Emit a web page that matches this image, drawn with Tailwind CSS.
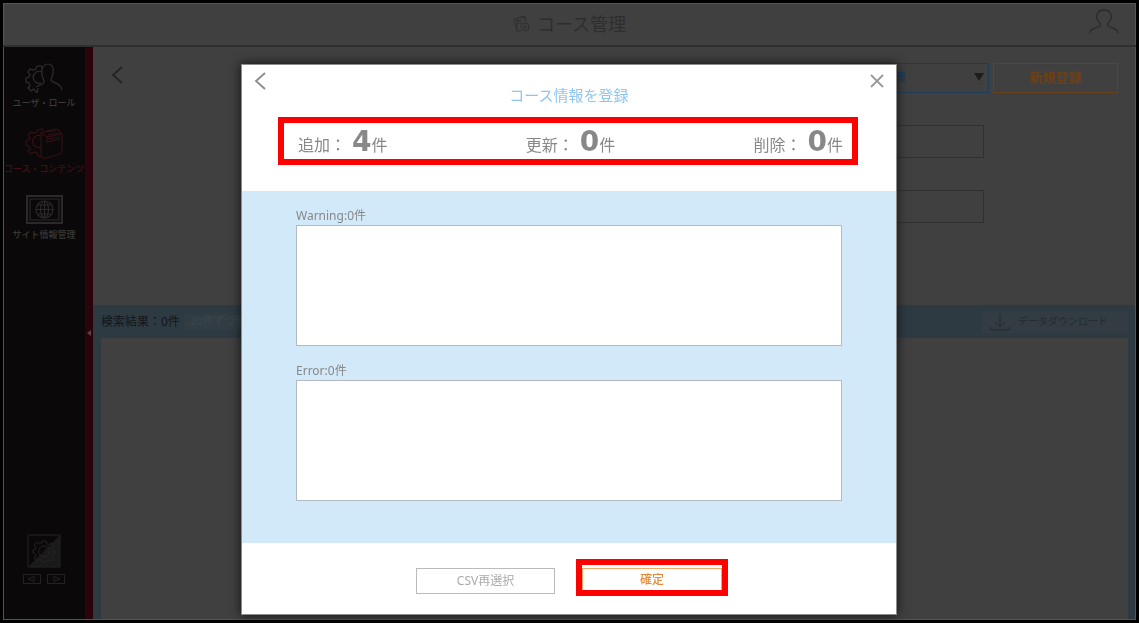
<!DOCTYPE html>
<html lang="ja">
<head>
  <meta charset="utf-8"/>
  <title>コース管理</title>
  <script src="https://cdn.jsdelivr.net/npm/@tailwindcss/browser@4"></script>
</head>
<body class="bg-[#404040] font-['Noto_Sans','Noto_Sans_CJK_JP',sans-serif]">
  <!-- icons used more than once -->
  <svg class="hidden">
    <symbol id="gear" viewBox="0 0 24 24" fill="none" stroke="currentColor">
      <path d="M10 2h4l.6 2.8 2.1.9 2.4-1.6 2.8 2.8-1.6 2.4.9 2.1L23 12v3l-2.2.6-.9 2.1 1.6 2.4-2.6 2.2-2.2-1.5-2.1.9L14 23h-4l-.6-2.3-2.1-.9-2.4 1.5-2.6-2.2 1.5-2.4-.9-2.1L1 14v-3l2-.6.8-2.1-1.5-2.4 2.8-2.8 2.4 1.6 1.9-.9z"/>
      <circle cx="12" cy="12.5" r="5.5"/>
    </symbol>
    <symbol id="back" viewBox="0 0 12 18" fill="none" stroke="currentColor" stroke-width="1.8">
      <path d="M11 1L2 9l9 8"/>
    </symbol>
  </svg>

  <div class="flex flex-col min-h-screen border-[3px] border-black outline-1 -outline-offset-4 outline-[#555]">
    <header class="relative flex h-11 shrink-0 items-center justify-center border-b-2 border-[#2f2f2f] text-[#2e2e2f]">
      <h1 class="flex items-center gap-1.5 text-lg">
        <svg class="size-[18px]" viewBox="0 0 18 18" fill="none" stroke="currentColor">
          <path d="M8 16H4L1 5l3-2v11M4 3l7-1 2 5M4 6l5-1M5 8h4M7 2l5-1 1 3"/>
          <circle cx="12" cy="12" r="4"/>
          <circle cx="12" cy="12" r="1.5"/>
        </svg>
        コース管理
      </h1>
      <button class="absolute right-4 top-1" aria-label="アカウント">
        <svg class="h-8 w-8" viewBox="0 0 32 32" fill="none" stroke="#2a2a2a" stroke-width="1.3">
          <path d="M2 26c0-4 3-4 8-6 3-1 3-3 1-5-2-2-3-4-2-7 1-4 4-5 7-5s6 1 7 5c1 3 0 5-2 7-2 2-2 4 1 5 5 2 7 2 8 6"/>
        </svg>
      </button>
    </header>

    <div class="flex flex-1">
      <nav class="flex w-[90px] shrink-0 flex-col justify-between border-r-8 border-[#2b040b] bg-[#0a0808] pt-3.5 pb-9 text-[9px] font-medium leading-4 text-[#3b3939]">
        <div class="flex flex-col">
          <a href="#" class="flex h-[66px] flex-col items-center gap-0.5 whitespace-nowrap">
            <svg class="h-8 w-10 shrink-0 text-[#302e2e]" viewBox="0 0 40 32" fill="none" stroke="currentColor" stroke-width="1.2">
              <path d="M18 7l-1-2h-4l-1 3-3 1-3-1-2 3 2 3-1 2-3 1v4l3 1 1 3-2 2 3 3 3-2 3 4 1-5M17 22a6 6 0 1 1 1-11"/>
              <path d="M12 26c6-3 8-3 8-6 0-2-2-3-2-6-1-8 2-11 6-11s6 3 5 9c0 4-2 5-2 7 0 3 10 2 11 10"/>
            </svg>
            <span>ユーザ・ロール</span>
          </a>
          <a href="#" class="flex h-[66px] flex-col items-center gap-0.5 whitespace-nowrap text-[#451015]">
            <svg class="h-8 w-10 shrink-0 text-[#351014]" viewBox="0 0 40 32" fill="none" stroke="currentColor" stroke-width="1.2">
              <path d="M19 4l-1-2-4 1-1 2-3 1-3-1-3 3 2 3-1 2-3 1v4l3 1 1 3-2 2 3 3 3-2 3 1 1 3 3 1M17 20a6 6 0 1 1 0-11"/>
              <path d="M17 7q0-2 3-2l11-3c3 0 4 1 5 3l2 2v18q0 1-2 2l-13 4c-3 1-6 0-6-3zM18 7q3 2 6 3l13-3M23 10v5l13-3M20 5q8-1 12-1M24 8l11-2M24 12l12-2"/>
            </svg>
            <span>コース・コンテンツ</span>
          </a>
          <a href="#" class="flex h-[66px] flex-col items-center gap-0.5 whitespace-nowrap">
            <svg class="h-8 w-10 shrink-0 text-[#2b2929]" viewBox="0 0 40 32" fill="none" stroke="currentColor" stroke-width="1.2">
              <path d="M3 3h35v27H3z" stroke-width="2"/>
              <path d="M6 6h29v21H6z"/>
              <circle cx="20.500" cy="16.500" r="8.500"/>
              <ellipse cx="20.500" cy="16.500" rx="4" ry="8.500"/>
              <path d="M20.500 8v17M12 16.500h17M14 12h13M14 21h13"/>
            </svg>
            <span>サイト情報管理</span>
          </a>
        </div>

        <div class="flex flex-col items-center gap-1.5">
          <div class="text-[#252520]">
            <svg class="size-[34px]" viewBox="0 0 34 34">
              <path d="M33 1v32H1z" fill="#1b1a1a"/>
              <path d="M1 1h32v32H1z" fill="none" stroke="#242222"/>
              <use href="#gear" x="5" y="5" width="24" height="24"/>
            </svg>
          </div>
          <div class="flex gap-1.5 text-[#242222]">
            <button aria-label="前へ"><svg class="h-2.5 w-[18px]" viewBox="0 0 18 10" fill="none" stroke="currentColor"><path d="M.5.5h17v9H.5zM11 2.500v5L5 5z"/></svg></button>
            <button aria-label="次へ"><svg class="h-2.5 w-[18px]" viewBox="0 0 18 10" fill="none" stroke="currentColor"><path d="M.5.5h17v9H.5zM7 2.500v5L13 5z"/></svg></button>
          </div>
        </div>

        <!-- sidebar handle -->
        <button class="absolute left-[86px] top-[329px]" aria-label="メニューを閉じる">
          <svg class="h-2 w-1.5" viewBox="0 0 6 8"><path d="M5 1v6L1 4z" fill="#5c4145"/></svg>
        </button>
      </nav>

      <main class="flex flex-1 flex-col">
        <section class="flex h-[258px] flex-col pt-4 pr-[18px]">
          <div class="flex items-start justify-between">
            <button class="ml-[18px] mt-[3px] text-[#242424]" aria-label="戻る">
              <svg class="h-[18px] w-3"><use href="#back"/></svg>
            </button>
            <div class="flex gap-1">
              <div class="relative">
                <select aria-label="管理対象" class="h-[30px] w-[148px] appearance-none border border-[#1c3c5c] pl-1 text-xs font-bold text-[#1c3c5c]">
                  <option>コース管理</option>
                </select>
                <svg class="pointer-events-none absolute right-1 top-2.5 h-2 w-3" viewBox="0 0 12 8"><path d="M1 0h10L6 8z" fill="#1c1c1c"/></svg>
              </div>
              <button class="h-[30px] w-[125px] border border-[#6b411a] text-[13px] font-bold text-[#6b411a]">新規登録</button>
            </div>
          </div>
          <div class="mt-8 mr-[134px] flex flex-col items-end gap-8">
            <input type="text" aria-label="コース名" class="h-[33px] w-[600px] border border-[#303030]"/>
            <input type="text" aria-label="コースID" class="h-[33px] w-[600px] border border-[#303030]"/>
          </div>
        </section>

        <section class="flex flex-1 flex-col bg-[#2e3a42] px-2">
          <div class="flex h-[33px] items-center justify-between text-[#121618]">
            <div class="flex items-center gap-1 text-xs">
              <p>検索結果：0件</p>
              <select aria-label="表示件数" class="h-4 appearance-none bg-[#313c43] px-1.5 text-[11px] text-[#3b474e]">
                <option>20件ずつ表示</option>
              </select>
            </div>
            <button class="flex h-[22px] w-[146px] items-center gap-2 bg-[#333c42] pl-2 text-[10px] text-[#232b30]">
              <svg class="h-[18px] w-5" viewBox="0 0 20 18" fill="none" stroke="currentColor"><path d="M10 1v13M5 9l5 5 5-5M1 14v3h18v-3"/></svg>
              データダウンロード
            </button>
          </div>
          <div class="flex-1 bg-[#404040]"></div>
        </section>
      </main>
    </div>
  </div>

  <!-- CSV import dialog -->
  <div class="fixed inset-0 flex justify-center pt-16 pr-px pb-2">
    <div role="dialog" aria-labelledby="dialogTitle" class="relative flex w-[656px] flex-col border border-[#8c8c8c] bg-white text-[#888] shadow-[0_0_10px_#111]">
      <button class="absolute left-3 top-[7px] text-[#8c8c8c]" aria-label="戻る">
        <svg class="h-[18px] w-3"><use href="#back"/></svg>
      </button>
      <button class="absolute right-3 top-[9px]" aria-label="閉じる">
        <svg class="size-3.5" viewBox="0 0 14 14" stroke="#999" stroke-width="1.800"><path d="M1 1l12 12M13 1L1 13"/></svg>
      </button>

      <div class="h-[126px] px-9 pt-5">
        <h2 id="dialogTitle" class="text-center text-[15px] leading-5 text-[#8fc6f0]">コース情報を登録</h2>
        <div class="mt-3 flex h-12 w-[580px] items-center justify-between border-6 border-[#f00] pt-1 pr-[9px] pl-3.5 text-base">
          <p class="flex items-baseline leading-9">追加：<b class="ml-1.5 font-['DejaVu_Sans'] text-[28px]">4</b>件</p>
          <p class="flex items-baseline leading-9">更新：<b class="ml-1.5 font-['DejaVu_Sans'] text-[28px]">0</b>件</p>
          <p class="flex items-baseline leading-9">削除：<b class="ml-1.5 font-['DejaVu_Sans'] text-[28px]">0</b>件</p>
        </div>
      </div>

      <div class="flex flex-1 flex-col gap-4 bg-[#d1e9f8] px-[54px] pt-4 text-xs">
        <div class="flex flex-col">
          <label for="warning" class="leading-[18px]">Warning:0件</label>
          <textarea id="warning" class="h-[121px] resize-none border border-[#b4bbc0] bg-white" readonly></textarea>
        </div>
        <div class="flex flex-col">
          <label for="error" class="leading-[18px]">Error:0件</label>
          <textarea id="error" class="h-[121px] resize-none border border-[#b4bbc0] bg-white" readonly></textarea>
        </div>
      </div>

      <div class="flex h-[71px] items-center justify-center gap-[21px] pt-1 pl-1.5 text-xs">
        <button class="h-[26px] w-[139px] border border-[#bbb] text-[#aaa]">CSV再選択</button>
        <div class="-mt-1.5 border-6 border-[#f00] bg-white pt-[3px]">
          <button class="block h-[22px] w-[140px] border border-b-0 border-[#f0a868] font-medium text-[#e58a35]">確定</button>
        </div>
      </div>
    </div>
  </div>
</body>
</html>
